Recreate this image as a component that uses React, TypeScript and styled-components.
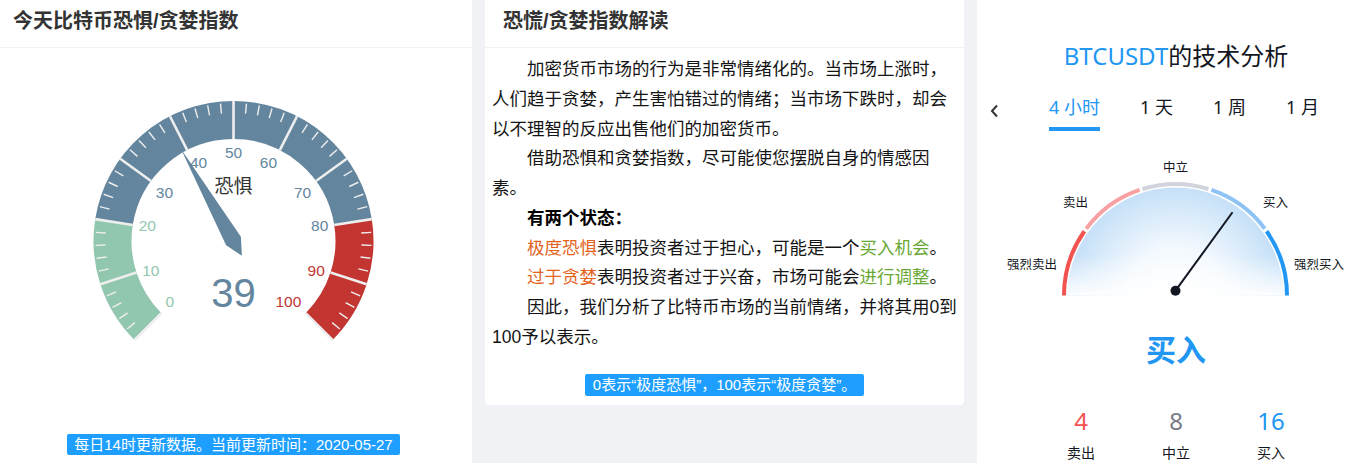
import React from 'react';
import styled, { createGlobalStyle } from 'styled-components';

const GlobalStyle = createGlobalStyle`
  html, body { margin: 0; padding: 0; background: #f0f2f5; overflow: hidden; }
  body { font-family: "Liberation Sans", "Noto Sans CJK SC", sans-serif; }
  * { box-sizing: border-box; }
`;

const Page = styled.div`
  display: flex;
  align-items: flex-start;
  width: 1346px;
  height: 463px;
  overflow: hidden;
  background: #f0f2f5;
`;

const LeftPanel = styled.section`
  flex: 0 0 472px;
  min-width: 0;
  height: 463px;
  background: #fff;
  display: flex;
  flex-direction: column;
`;

const PanelHeader = styled.header<{ $pl: number }>`
  height: 48px;
  padding: 8px 0 0 ${(p) => p.$pl}px;
  border-bottom: 1px solid #f1f1f1;
  font-size: 20px;
  line-height: 26px;
  font-weight: 700;
  color: #333;
  align-self: stretch;
`;

const LeftBody = styled.div`
  display: flex;
  flex-direction: column;
  align-items: center;
  padding-right: 5px;
`;

const GaugeSvg = styled.svg`
  display: block;
  flex: none;
`;

const Badge = styled.div<{ $h: number; $pad: number }>`
  background: #1e9fff;
  color: #fff;
  font-size: 15px;
  line-height: ${(p) => p.$h}px;
  padding: 0 ${(p) => p.$pad}px;
  border-radius: 2px;
  white-space: nowrap;
`;

const LeftBadge = styled(Badge)`
  margin-top: 26px;
`;

const Card = styled.section`
  flex: 0 0 479px;
  min-width: 0;
  margin: 0 13px;
  background: #fff;
  border-radius: 0 0 4px 4px;
  padding-bottom: 9px;
  display: flex;
  flex-direction: column;
  align-items: center;
`;

const CardBody = styled.div`
  align-self: stretch;
  padding: 7px 5px 0 7px;
  font-size: 17.5px;
  line-height: 29.75px;
  color: #141414;
`;

const Para = styled.p`
  margin: 0;
  text-indent: 2em;
`;

const Bold = styled.strong`
  font-weight: 700;
  color: #000;
`;

const Hl = styled.span<{ $tone: 'warn' | 'good' }>`
  color: ${(p) => (p.$tone === 'warn' ? '#e3631d' : '#68a834')};
`;

const CardBadge = styled(Badge)`
  margin-top: 21px;
`;

const RightPanel = styled.section`
  flex: 0 0 398px;
  min-width: 0;
  height: 463px;
  background: #fff;
  display: flex;
  flex-direction: column;
  align-items: center;
  font-family: "Noto Sans", "Noto Sans CJK SC", sans-serif;
  color: #131722;
`;

const TechTitle = styled.h2`
  margin: 40px 0 0;
  font-size: 24px;
  line-height: 32px;
  font-weight: 400;
  color: #131722;
`;

const Blue = styled.span`
  color: #2196f3;
`;

const TabRow = styled.nav`
  align-self: stretch;
  display: flex;
  margin-top: 22px;
  height: 38px;
`;

const Chevron = styled.div`
  flex: 0 0 52px;
  padding: 7px 0 0 13px;
  color: #333;
`;

const Tab = styled.div<{ $active?: boolean }>`
  position: relative;
  padding: 0 20px;
  font-size: 18px;
  line-height: 26px;
  color: ${(p) => (p.$active ? '#2196f3' : '#131722')};
  white-space: nowrap;
  &::after {
    content: '';
    display: ${(p) => (p.$active ? 'block' : 'none')};
    position: absolute;
    left: 20px;
    right: 20px;
    bottom: 0;
    height: 4px;
    background: #2196f3;
  }
`;

const TechGauge = styled.svg`
  display: block;
  margin-top: 8px;
  flex: none;
`;

const Signal = styled.div`
  margin-top: 29px;
  font-size: 30px;
  line-height: 40px;
  font-weight: 700;
  color: #2196f3;
`;

const Counts = styled.div`
  display: grid;
  grid-template-columns: repeat(3, 95px);
  margin-top: 36px;
`;

const CountCell = styled.div`
  display: flex;
  flex-direction: column;
  align-items: center;
`;

const CountNum = styled.div<{ $color: string }>`
  font-size: 24px;
  line-height: 30px;
  color: ${(p) => p.$color};
`;

const CountLabel = styled.div`
  margin-top: 7px;
  font-size: 14px;
  line-height: 20px;
  color: #131722;
`;

/* ---------- Fear & greed gauge ---------- */
const LG = { cx: 233.5, cy: 193, R: 140, w: 38 };
const ang = (v: number) => ((225 - 2.7 * v) * Math.PI) / 180;
const pt = (r: number, a: number) => [LG.cx + r * Math.cos(a), LG.cy - r * Math.sin(a)];
const arc = (r: number, v1: number, v2: number) => {
  const [x1, y1] = pt(r, ang(v1));
  const [x2, y2] = pt(r, ang(v2));
  const large = (v2 - v1) * 2.7 > 180 ? 1 : 0;
  return `M${x1.toFixed(2)} ${y1.toFixed(2)} A${r} ${r} 0 ${large} 1 ${x2.toFixed(2)} ${y2.toFixed(2)}`;
};
const colorFor = (v: number) => (v <= 20 ? '#91c7ae' : v <= 80 ? '#63869e' : '#c23531');

function FearGauge({ value }: { value: number }) {
  const segs: [number, number, string][] = [
    [0, 20, '#91c7ae'],
    [20, 80, '#63869e'],
    [80, 100, '#c23531'],
  ];
  const ticks: number[] = [];
  for (let v = 0; v <= 100; v += 2) if (v % 10 !== 0) ticks.push(v);
  const splits: number[] = [];
  for (let v = 0; v <= 100; v += 10) splits.push(v);
  const a = ang(value);
  const ux = Math.cos(a);
  const uy = -Math.sin(a);
  const px = -uy;
  const py = ux;
  const { cx, cy } = LG;
  const len = 106;
  const wd = 8.5;
  const pointer = [
    [cx + ux * len, cy + uy * len],
    [cx + px * wd, cy + py * wd],
    [cx - ux * wd * 2, cy - uy * wd * 2],
    [cx - px * wd, cy - py * wd],
  ]
    .map((p) => p.map((n) => n.toFixed(2)).join(','))
    .join(' ');
  return (
    <GaugeSvg width={467} height={360} viewBox="0 0 467 360">
      {segs.map(([a1, a2, c]) => (
        <path key={a1} d={arc(LG.R - LG.w / 2, a1, a2)} stroke={c} strokeWidth={LG.w} fill="none" />
      ))}
      {ticks.map((v) => {
        const [x1, y1] = pt(LG.R - 2, ang(v));
        const [x2, y2] = pt(LG.R - 12, ang(v));
        return <line key={v} x1={x1} y1={y1} x2={x2} y2={y2} stroke="#eee" strokeWidth={1.4} />;
      })}
      {splits.map((v) => {
        const [x1, y1] = pt(LG.R, ang(v));
        const [x2, y2] = pt(LG.R - LG.w, ang(v));
        return <line key={v} x1={x1} y1={y1} x2={x2} y2={y2} stroke="#eee" strokeWidth={2.6} />;
      })}
      {splits.map((v) => {
        const av = ang(v);
        const ex = Math.cos(av);
        const ey = -Math.sin(av);
        const d = 96;
        const x = cx + ex * d;
        let y = cy + ey * d;
        const anchor = ex < -0.4 ? 'start' : ex > 0.4 ? 'end' : 'middle';
        if (ey < -0.4) y += 7.5;
        else if (ey > 0.4) y -= 7.5;
        return (
          <text
            key={v}
            x={x}
            y={y}
            fontSize={15.5}
            fill={colorFor(v)}
            textAnchor={anchor}
            dominantBaseline="central"
            fontFamily="Liberation Sans, sans-serif"
          >
            {v}
          </text>
        );
      })}
      <text x={cx} y={cy - 57} fontSize={19} fill="#333" textAnchor="middle" dominantBaseline="central" fontFamily="Noto Sans CJK SC, sans-serif">
        恐惧
      </text>
      <polygon points={pointer} fill="#63869e" />
      <text x={cx} y={cy + 52} fontSize={40} fill="#63869e" textAnchor="middle" dominantBaseline="central" fontFamily="Liberation Sans, sans-serif">
        {value}
      </text>
    </GaugeSvg>
  );
}

/* ---------- Technical gauge ---------- */
const TG = { cx: 198.5, cy: 156.5, r: 111.5 };
const tpt = (r: number, deg: number) => {
  const a = (deg * Math.PI) / 180;
  return [TG.cx + r * Math.cos(a), TG.cy - r * Math.sin(a)];
};
const tarc = (r: number, d1: number, d2: number) => {
  const [x1, y1] = tpt(r, d1);
  const [x2, y2] = tpt(r, d2);
  return `M${x1.toFixed(2)} ${y1.toFixed(2)} A${r} ${r} 0 0 1 ${x2.toFixed(2)} ${y2.toFixed(2)}`;
};

function TechnicalGauge({ needleDeg }: { needleDeg: number }) {
  const colors = ['#f05350', '#f7a1a3', '#d1d4dc', '#8ec3f5', '#2196f3'];
  const g = 0.8;
  const dotY = TG.cy - 4.8;
  const a = (needleDeg * Math.PI) / 180;
  const tip = [TG.cx + 97 * Math.cos(a), dotY - 97 * Math.sin(a)];
  const labels: [string, number, number][] = [
    ['强烈卖出', 55, 124],
    ['卖出', 98.5, 62.5],
    ['中立', 198.5, 27],
    ['买入', 298.5, 62.5],
    ['强烈买入', 342, 124],
  ];
  const fr = 108;
  return (
    <TechGauge width={398} height={162} viewBox="0 0 398 162">
      <defs>
        <radialGradient id="tgFill" cx={TG.cx} cy={TG.cy} r={fr} gradientUnits="userSpaceOnUse">
          <stop offset="0" stopColor="#ffffff" />
          <stop offset="0.45" stopColor="#f3f9fe" />
          <stop offset="1" stopColor="#c6e0f8" />
        </radialGradient>
        <linearGradient id="tgFade" x1="0" y1={TG.cy - 40} x2="0" y2={TG.cy} gradientUnits="userSpaceOnUse">
          <stop offset="0" stopColor="#ffffff" stopOpacity="0" />
          <stop offset="1" stopColor="#ffffff" stopOpacity="0.95" />
        </linearGradient>
      </defs>
      <path d={`M${TG.cx - fr} ${TG.cy} A${fr} ${fr} 0 0 1 ${TG.cx + fr} ${TG.cy} Z`} fill="url(#tgFill)" />
      <path d={`M${TG.cx - fr} ${TG.cy} A${fr} ${fr} 0 0 1 ${TG.cx + fr} ${TG.cy} Z`} fill="url(#tgFade)" />
      {colors.map((c, i) => {
        const d1 = 180 - 36 * i - (i === 0 ? 0 : g);
        const d2 = 180 - 36 * (i + 1) + (i === 4 ? 0 : g);
        return <path key={c} d={tarc(TG.r, d1, d2)} stroke={c} strokeWidth={4} fill="none" />;
      })}
      {labels.map(([t, x, y]) => (
        <text key={t} x={x} y={y} fontSize={12.5} fill="#131722" textAnchor="middle" dominantBaseline="central" fontFamily="Noto Sans CJK SC, sans-serif">
          {t}
        </text>
      ))}
      <line x1={TG.cx} y1={dotY} x2={tip[0]} y2={tip[1]} stroke="#131722" strokeWidth={2} />
      <circle cx={TG.cx} cy={dotY} r={5} fill="#131722" />
    </TechGauge>
  );
}

export default function App() {
  return (
    <>
      <GlobalStyle />
      <Page>
        <LeftPanel>
          <PanelHeader $pl={13}>今天比特币恐惧/贪婪指数</PanelHeader>
          <LeftBody>
            <FearGauge value={39} />
            <LeftBadge $h={21} $pad={7}>每日14时更新数据。当前更新时间：2020-05-27</LeftBadge>
          </LeftBody>
        </LeftPanel>

        <Card>
          <PanelHeader $pl={18}>恐慌/贪婪指数解读</PanelHeader>
          <CardBody>
            <Para>加密货币市场的行为是非常情绪化的。当市场上涨时，人们趋于贪婪，产生害怕错过的情绪；当市场下跌时，却会以不理智的反应出售他们的加密货币。</Para>
            <Para>借助恐惧和贪婪指数，尽可能使您摆脱自身的情感因素。</Para>
            <Para>
              <Bold>有两个状态：</Bold>
            </Para>
            <Para>
              <Hl $tone="warn">极度恐惧</Hl>表明投资者过于担心，可能是一个<Hl $tone="good">买入机会</Hl>。
            </Para>
            <Para>
              <Hl $tone="warn">过于贪婪</Hl>表明投资者过于兴奋，市场可能会<Hl $tone="good">进行调整</Hl>。
            </Para>
            <Para>因此，我们分析了比特币市场的当前情绪，并将其用0到100予以表示。</Para>
          </CardBody>
          <CardBadge $h={22} $pad={8}>0表示“极度恐惧”，100表示“极度贪婪”。</CardBadge>
        </Card>

        <RightPanel>
          <TechTitle>
            <Blue>BTCUSDT</Blue>的技术分析
          </TechTitle>
          <TabRow>
            <Chevron>
              <svg width="9" height="14" viewBox="0 0 9 14">
                <polyline points="7,1.5 2,7 7,12.5" fill="none" stroke="#333" strokeWidth="2" />
              </svg>
            </Chevron>
            <Tab $active>4 小时</Tab>
            <Tab>1 天</Tab>
            <Tab>1 周</Tab>
            <Tab>1 月</Tab>
          </TabRow>
          <TechnicalGauge needleDeg={54} />
          <Signal>买入</Signal>
          <Counts>
            <CountCell>
              <CountNum $color="#f05350">4</CountNum>
              <CountLabel>卖出</CountLabel>
            </CountCell>
            <CountCell>
              <CountNum $color="#787b86">8</CountNum>
              <CountLabel>中立</CountLabel>
            </CountCell>
            <CountCell>
              <CountNum $color="#2196f3">16</CountNum>
              <CountLabel>买入</CountLabel>
            </CountCell>
          </Counts>
        </RightPanel>
      </Page>
    </>
  );
}
